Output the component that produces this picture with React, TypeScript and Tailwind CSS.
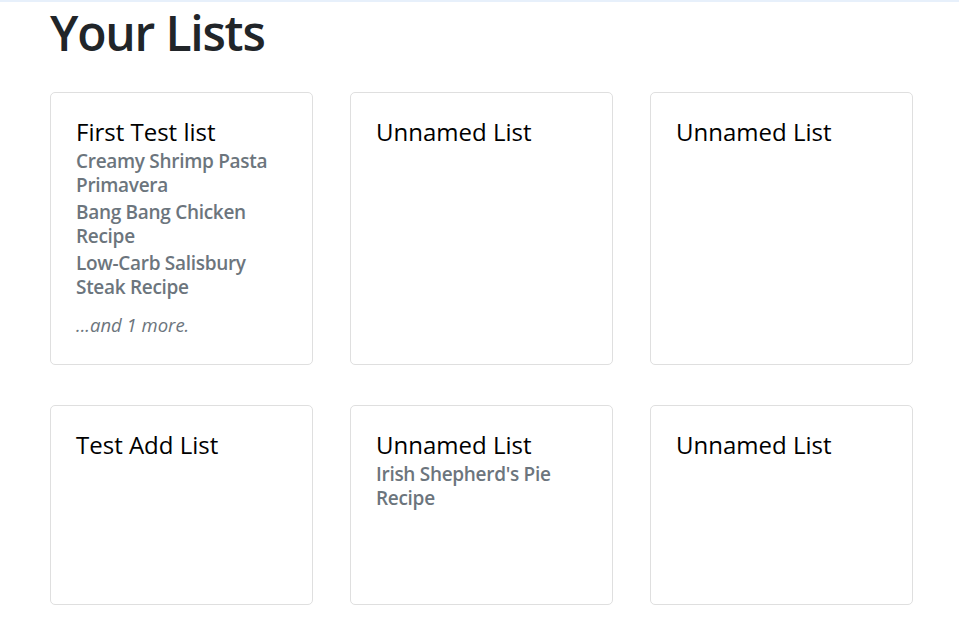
import React from "react";

type ListCard = { title: string; items: string[]; more?: string };

const rows: ListCard[][] = [
  [
    {
      title: "First Test list",
      items: ["Creamy Shrimp Pasta Primavera", "Bang Bang Chicken Recipe", "Low-Carb Salisbury Steak Recipe"],
      more: "...and 1 more.",
    },
    { title: "Unnamed List", items: [] },
    { title: "Unnamed List", items: [] },
  ],
  [
    { title: "Test Add List", items: [] },
    { title: "Unnamed List", items: ["Irish Shepherd's Pie Recipe"] },
    { title: "Unnamed List", items: [] },
  ],
];

function Card({ card }: { card: ListCard }) {
  return (
    <div className="min-h-[200px] rounded-[5px] border border-[#dfdfdf] bg-white px-[25px] pt-[24px] pb-[24px]">
      <h4 className="text-[24px] leading-[29px] font-normal text-black">{card.title}</h4>
      {card.items.map((it) => (
        <div
          key={it}
          className="mt-[3px] text-[19px] leading-[24px] font-semibold tracking-[-0.3px] text-[#6c757d]"
        >
          {it}
        </div>
      ))}
      {card.more && (
        <div className="mt-[14px] mb-[3px] text-[18.5px] leading-[24px] italic text-[#6c757d]">{card.more}</div>
      )}
    </div>
  );
}

export default function App() {
  return (
    <div className="relative min-h-screen bg-white" style={{ fontFamily: '"Open Sans", "Noto Sans", sans-serif' }}>
      <div className="absolute left-0 right-0 top-0 h-[2px] bg-[#e7f0fb]" />
      <div className="pl-[50px] pr-[46px]">
        <h1 className="text-[48px] leading-[66px] font-semibold tracking-[-1.2px] text-[#212529]">Your Lists</h1>
        <div className="mt-[26px] flex flex-col gap-[40px]">
          {rows.map((row, i) => (
            <div key={i} className="grid grid-cols-[263px_263px_263px] gap-x-[37px]">
              {row.map((c, j) => (
                <Card key={j} card={c} />
              ))}
            </div>
          ))}
        </div>
      </div>
    </div>
  );
}
